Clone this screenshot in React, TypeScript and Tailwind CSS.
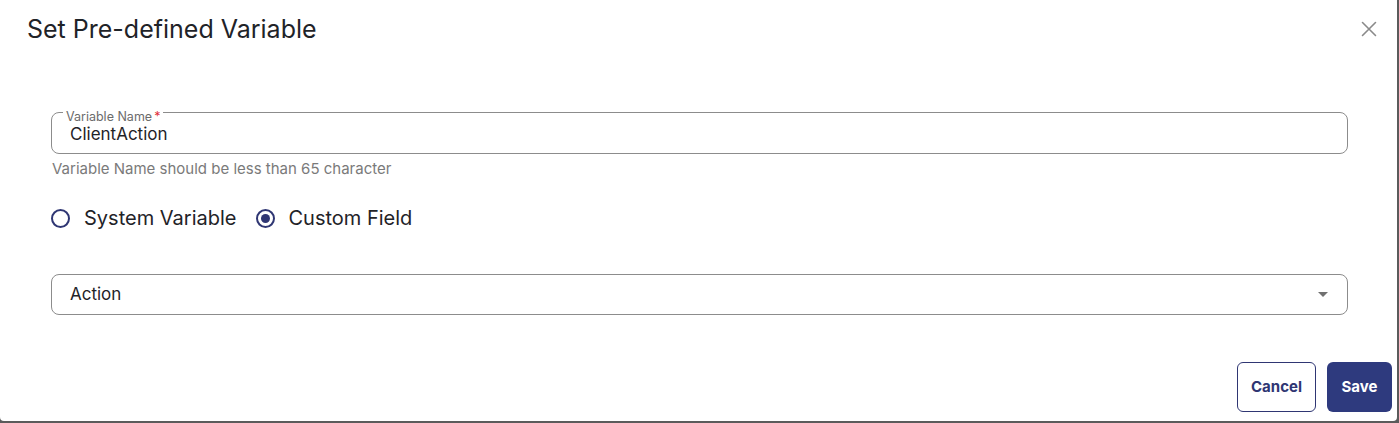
import React from "react";

export default function App() {
  return (
    <div className="w-[1399px] h-[423px] bg-[#5b5b5b] overflow-hidden" style={{ fontFamily: "Inter, 'Noto Sans', sans-serif" }}>
      <div className="w-[1397px] h-[421px] bg-white rounded-b-[4px] flex flex-col">
        <div className="flex items-center justify-between pl-[27px] pr-[20px] h-[58px]">
          <h2 className="text-[25px] text-[#1f2328] font-normal leading-[30px]">Set Pre-defined Variable</h2>
          <svg width="16" height="16" viewBox="0 0 16 16">
            <path d="M1.5 1.5 L14.5 14.5 M14.5 1.5 L1.5 14.5" stroke="#8a8a8a" strokeWidth="1.6" strokeLinecap="round" />
          </svg>
        </div>
        <div className="px-[51px] pt-[43px]">
          <fieldset className="relative h-[53px] border border-[#8c8c8c] rounded-[8px] px-[11px] w-[1297px]">
            <legend className="px-[3px] pt-[10px] text-[12.5px] leading-[12px] text-[#6b6b6b]">
              Variable Name<span className="text-[#e0303a] ml-[2px]">*</span>
            </legend>
            <div className="text-[17px] text-[#1f2328] leading-[22px] pl-[7px]">ClientAction</div>
          </fieldset>
          <p className="text-[15px] text-[#7a7a7a] mt-[6px] ml-[1px] leading-[18px]">Variable Name should be less than 65 character</p>
          <div className="flex items-center mt-[28px] h-[24px]">
            <span className="w-[19px] h-[19px] rounded-full border-2 border-[#2f3673] bg-white" />
            <span className="ml-[14px] text-[20px] text-[#1f2328]">System Variable</span>
            <span className="ml-[20px] w-[19px] h-[19px] rounded-full border-2 border-[#2f3673] flex items-center justify-center">
              <span className="w-[9px] h-[9px] rounded-full bg-[#2f3673]" />
            </span>
            <span className="ml-[13px] text-[20px] text-[#1f2328]">Custom Field</span>
          </div>
          <div className="mt-[44px] w-[1297px] h-[41px] border border-[#8c8c8c] rounded-[8px] flex items-center justify-between pl-[18px] pr-[19px]">
            <span className="text-[17px] text-[#1f2328]">Action</span>
            <svg width="10" height="5" viewBox="0 0 10 5">
              <path d="M0 0 L10 0 L5 5 Z" fill="#707070" />
            </svg>
          </div>
        </div>
        <div className="flex justify-end gap-[11px] pr-[5px] mt-[47px]">
          <button className="w-[79px] h-[50px] rounded-[6px] border border-[#2f3673] text-[#2f3673] text-[15px] font-bold bg-white">Cancel</button>
          <button className="w-[65px] h-[50px] rounded-[6px] bg-[#2e3a7e] text-white text-[15px] font-bold">Save</button>
        </div>
      </div>
    </div>
  );
}
